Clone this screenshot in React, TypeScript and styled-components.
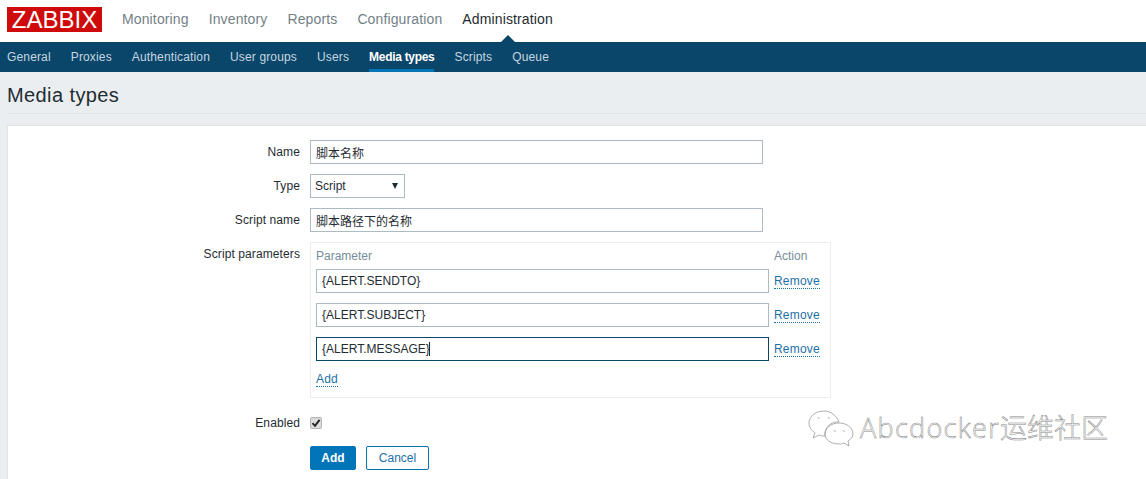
import React from "react";
import styled, { createGlobalStyle } from "styled-components";

const Global = createGlobalStyle`
  html, body { margin: 0; padding: 0; background: #ebeef0; height: 100%; overflow: hidden; }
  body { font-family: "Liberation Sans", "Noto Sans CJK SC", sans-serif; font-size: 12px; color: #1f2c33; }
  * { box-sizing: border-box; }
`;

const Page = styled.div`
  position: relative;
  width: 1146px;
  height: 479px;
  overflow: hidden;
`;
const TopBar = styled.header`
  height: 42px;
  background: #fff;
  display: flex;
  align-items: flex-start;
  padding-left: 7px;
`;
const Logo = styled.div`
  width: 95px;
  height: 25px;
  margin-top: 7px;
  background: #cf0a0a;
  color: #fff;
  font-size: 24px;
  line-height: 26px;
  text-align: center;
`;
const TopNav = styled.nav`
  display: flex;
  gap: 20px;
  margin-left: 20px;
  padding-top: 11px;
  position: relative;
`;
const TopItem = styled.span<{ $active?: boolean }>`
  position: relative;
  font-size: 14px;
  line-height: 16px;
  letter-spacing: 0.13px;
  color: ${(p) => (p.$active ? "#1f2c33" : "#737f87")};
  ${(p) =>
    p.$active &&
    `&::after {
      content: "";
      position: absolute;
      left: 50%;
      margin-left: -7px;
      top: 24px;
      border-left: 7px solid transparent;
      border-right: 7px solid transparent;
      border-bottom: 7px solid #0a466a;
    }`}
`;
const SubNav = styled.nav`
  height: 30px;
  background: #0a466a;
  display: flex;
  gap: 20px;
  padding-left: 7px;
`;
const SubItem = styled.span<{ $active?: boolean }>`
  height: 30px;
  line-height: 30px;
  font-size: 12px;
  color: ${(p) => (p.$active ? "#fff" : "#c6d6e0")};
  font-weight: ${(p) => (p.$active ? 700 : 400)};
  letter-spacing: ${(p) => (p.$active ? "-0.3px" : "0.15px")};
  border-bottom: ${(p) => (p.$active ? "3px solid #0275b8" : "none")};
`;
const TitleBar = styled.div`
  margin: 0 0 0 7px;
  height: 42px;
  border-bottom: 1px solid #dfe4e7;
  display: flex;
  align-items: center;
`;
const Title = styled.h1`
  margin: 5px 0 0;
  font-size: 20px;
  font-weight: 400;
  letter-spacing: 0.4px;
  color: #1f2c33;
`;
const Panel = styled.main`
  margin: 11px 0 0 7px;
  height: 400px;
  background: #fff;
  border: 1px solid #dfe4e7;
  border-right: none;
  padding-top: 14px;
  display: flex;
  flex-direction: column;
  gap: 10px;
`;
const Row = styled.div<{ $gap?: number }>`
  display: flex;
  align-items: flex-start;
  gap: 10px;
  margin-top: ${(p) => p.$gap ?? 0}px;
`;
const Label = styled.label`
  width: 292px;
  text-align: right;
  font-size: 12px;
  line-height: 24px;
  letter-spacing: 0.1px;
  color: #1f2c33;
  flex: none;
`;
const TextInput = styled.input<{ $w: number; $focus?: boolean }>`
  display: block;
  width: ${(p) => p.$w}px;
  height: 24px;
  border: 1px solid ${(p) => (p.$focus ? "#0a466a" : "#acbbc2")};
  background: #fff;
  padding: 0 5px;
  font-family: "Liberation Sans", "Noto Sans CJK SC", sans-serif;
  font-size: 12px;
  color: #1f2c33;
  outline: none;
  border-radius: 0;
`;
const SelectBox = styled.div`
  width: 95px;
  height: 24px;
  border: 1px solid #acbbc2;
  display: flex;
  align-items: center;
  justify-content: space-between;
  padding: 0 5px 0 4px;
  font-size: 12px;
`;
const Arrow = styled.span`
  width: 0;
  height: 0;
  margin-right: 1px;
  border-left: 3.5px solid transparent;
  border-right: 3.5px solid transparent;
  border-top: 6px solid #1f2c33;
`;
const ParamBox = styled.div`
  width: 521px;
  height: 156px;
  border: 1px solid #ebeef0;
  padding: 5px 5px 0;
  display: grid;
  grid-template-columns: 453px 1fr;
  grid-template-rows: 11px 24px 24px 24px 16px;
  column-gap: 5px;
  row-gap: 10px;
  align-content: start;
`;
const Head = styled.span`
  font-size: 12px;
  line-height: 16px;
  color: #768d99;
  height: 16px;
`;
const InputWrap = styled.div`
  position: relative;
`;
const Caret = styled.span`
  position: absolute;
  left: 113px;
  top: 5px;
  width: 1px;
  height: 14px;
  background: #1f2c33;
`;
const DottedLink = styled.a`
  align-self: center;
  justify-self: start;
  margin-top: 2px;
  font-size: 12px;
  line-height: 13px;
  letter-spacing: 0.2px;
  color: #1d6fa8;
  border-bottom: 1px dotted #1d6fa8;
`;
const PrimaryBtn = styled.button`
  width: 46px;
  height: 24px;
  background: #0275b8;
  color: #fff;
  border: 1px solid #0275b8;
  border-radius: 2px;
  font-family: inherit;
  font-size: 12px;
  font-weight: 700;
  padding: 0;
`;
const SecondaryBtn = styled.button`
  width: 63px;
  height: 24px;
  background: #fff;
  color: #1d6fa8;
  border: 1px solid #0275b8;
  border-radius: 2px;
  font-family: inherit;
  font-size: 12px;
  padding: 0;
`;
const CheckBox = styled.span`
  width: 12px;
  height: 12px;
  margin-top: 6px;
  border: 1px solid #b4b4b4;
  border-radius: 2px;
  background: #dcdcdc;
  display: flex;
  align-items: center;
  justify-content: center;
`;
const Buttons = styled.div`
  display: flex;
  gap: 10px;
  margin-left: 302px;
  margin-top: 1px;
`;
const Watermark = styled.div`
  position: absolute;
  left: 808px;
  top: 408px;
  display: flex;
  align-items: center;
  gap: 6px;
  height: 40px;
`;
const WatermarkText = styled.span`
  font-family: "Open Sans", "Noto Sans CJK SC", sans-serif;
  font-size: 27px;
  font-weight: 300;
  line-height: 40px;
  color: #fff;
  -webkit-text-stroke: 0.5px #858585;
  white-space: nowrap;
`;
const WatermarkLatin = styled.span`
  letter-spacing: 1.3px;
`;

const top = ["Monitoring", "Inventory", "Reports", "Configuration", "Administration"];
const sub = ["General", "Proxies", "Authentication", "User groups", "Users", "Media types", "Scripts", "Queue"];
const params = ["{ALERT.SENDTO}", "{ALERT.SUBJECT}", "{ALERT.MESSAGE}"];

export default function App() {
  return (
    <Page>
      <Global />
      <TopBar>
        <Logo>ZABBIX</Logo>
        <TopNav>
          {top.map((t) => (
            <TopItem key={t} $active={t === "Administration"}>{t}</TopItem>
          ))}
        </TopNav>
      </TopBar>
      <SubNav>
        {sub.map((t) => (
          <SubItem key={t} $active={t === "Media types"}>{t}</SubItem>
        ))}
      </SubNav>
      <TitleBar>
        <Title>Media types</Title>
      </TitleBar>
      <Panel>
        <Row>
          <Label>Name</Label>
          <TextInput $w={453} readOnly value="脚本名称" />
        </Row>
        <Row>
          <Label>Type</Label>
          <SelectBox>Script<Arrow /></SelectBox>
        </Row>
        <Row>
          <Label>Script name</Label>
          <TextInput $w={453} readOnly value="脚本路径下的名称" />
        </Row>
        <Row>
          <Label>Script parameters</Label>
          <ParamBox>
            <Head>Parameter</Head>
            <Head>Action</Head>
            {params.map((p, i) => (
              <React.Fragment key={p}>
                <InputWrap>
                  <TextInput $w={453} $focus={i === 2} readOnly value={p} />
                  {i === 2 && <Caret />}
                </InputWrap>
                <DottedLink>Remove</DottedLink>
              </React.Fragment>
            ))}
            <DottedLink>Add</DottedLink>
          </ParamBox>
        </Row>
        <Row $gap={3}>
          <Label>Enabled</Label>
          <CheckBox>
            <svg width="10" height="10" viewBox="0 0 10 10">
              <path d="M1.5 5.2 L4 7.8 L8.6 1.8" fill="none" stroke="#222" strokeWidth="1.9" />
            </svg>
          </CheckBox>
        </Row>
        <Buttons>
          <PrimaryBtn>Add</PrimaryBtn>
          <SecondaryBtn>Cancel</SecondaryBtn>
        </Buttons>
      </Panel>
      <Watermark>
        <svg width="46" height="38" viewBox="0 0 46 38" fill="none" stroke="#9a9a9a" strokeWidth="0.8">
          <path d="M16 2 C7 2 1 8 1 14 C1 18 3 21 7 24 L5 29 L11 26 C13 27 15 27 17 27 C16 19 23 12 31 13 C29 7 23 2 16 2 Z" />
          <path d="M31 14 C23 14 17 19 17 25 C17 31 23 35 31 35 C33 35 34 35 36 34 L41 37 L40 32 C43 30 45 28 45 25 C45 19 39 14 31 14 Z" />
          <path d="M10 8 L11.5 10 M20 8 L21.5 10 M26 21 L27.5 23 M35 21 L36.5 23" />
        </svg>
        <WatermarkText><WatermarkLatin>Abcdocker</WatermarkLatin>运维社区</WatermarkText>
      </Watermark>
    </Page>
  );
}
